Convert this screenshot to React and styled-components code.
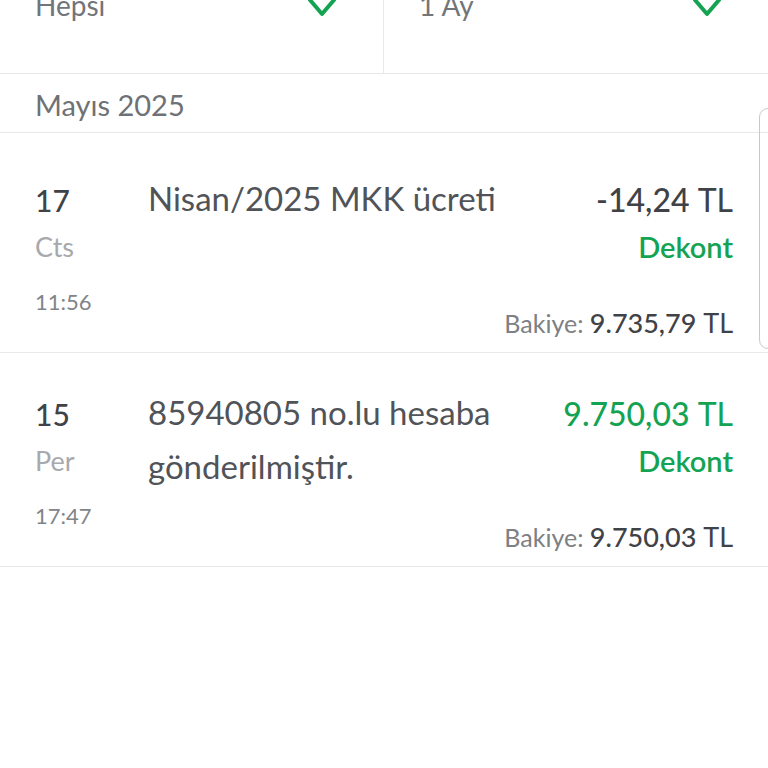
import React from 'react';
import styled, { createGlobalStyle } from 'styled-components';

const GlobalStyle = createGlobalStyle`
	html, body {
		margin: 0;
		padding: 0;
		background: #ffffff;
		overflow: hidden;
	}
	body {
		font-family: Lato, "Open Sans", sans-serif;
		-webkit-font-smoothing: antialiased;
	}
`;

const Screen = styled.div`
	position: relative;
	width: 768px;
	height: 768px;
	overflow: hidden;
	background: #ffffff;
`;

const FilterBar = styled.div`
	display: grid;
	grid-template-columns: 384px 1fr;
	height: 110px;
	margin-top: -37px;
	border-bottom: 1px solid #e8e8e8;
`;

const FilterCell = styled.div`
	display: flex;
	align-items: flex-start;
	justify-content: space-between;
	padding: 26px 47px 0 35px;
	border-right: ${(p) => (p.$divider ? '1px solid #e8e8e8' : 'none')};
`;

const FilterLabel = styled.span`
	font-size: 28px;
	line-height: 1.2;
	color: #727579;
`;

const Chevron = styled.svg`
	width: 28px;
	height: 18px;
	margin-top: 10px;
`;

const MonthHeader = styled.div`
	height: 59px;
	display: flex;
	align-items: center;
	padding: 2px 35px 0 35px;
	box-sizing: border-box;
	font-size: 29px;
	color: #6e7175;
	border-bottom: 1px solid #e8e8e8;
`;

const Row = styled.div`
	display: flex;
	padding: ${(p) => p.$top}px 35px 14px 35px;
	border-bottom: 1px solid #e8e8e8;
`;

const DateCol = styled.div`
	display: flex;
	flex-direction: column;
	width: 113px;
	flex-shrink: 0;
`;

const Main = styled.div`
	flex: 1;
	display: grid;
	grid-template-columns: minmax(0, 1fr) auto;
	grid-template-rows: auto auto;
`;

const DayNum = styled.div`
	font-size: 30px;
	line-height: 36px;
	font-weight: 500;
	color: #3f4247;
`;

const DayName = styled.div`
	font-size: 27px;
	line-height: 33px;
	margin-top: 12px;
	color: #a7a9ac;
`;

const Time = styled.div`
	font-size: 22px;
	line-height: 29px;
	margin-top: 24px;
	color: #818488;
`;

const Desc = styled.div`
	grid-column: 1;
	grid-row: 1 / span 2;
	font-size: 33px;
	line-height: 54px;
	margin-top: -11px;
	color: #505358;
	padding-right: 16px;
`;

const AmountCol = styled.div`
	grid-column: 2;
	grid-row: 1;
	display: flex;
	flex-direction: column;
	align-items: flex-end;
	white-space: nowrap;
`;

const Amount = styled.div`
	font-size: 32px;
	line-height: 36px;
	font-weight: 500;
	color: ${(p) => (p.$positive ? '#14a352' : '#3f4247')};
`;

const Currency = styled.span`
	font-weight: 400;
`;

const Receipt = styled.div`
	font-size: 29px;
	line-height: 33px;
	margin-top: 12px;
	font-weight: 600;
	color: #14a352;
`;

const Balance = styled.div`
	grid-column: 1 / -1;
	grid-row: 2;
	justify-self: end;
	white-space: nowrap;
	font-size: 25px;
	line-height: 29px;
	margin-top: 45px;
	color: #7d8084;
`;

const BalanceValue = styled.span`
	font-size: 27px;
	font-weight: 500;
	color: #3f4247;
`;

const ScrollHandle = styled.div`
	position: absolute;
	left: 759px;
	top: 108px;
	width: 24px;
	height: 239px;
	border: 1.5px solid #c9c9c9;
	border-radius: 9px;
	background: transparent;
`;

const transactions = [
	{
		day: '17',
		dayName: 'Cts',
		time: '11:56',
		desc: 'Nisan/2025 MKK ücreti',
		amount: '-14,24',
		positive: false,
		balance: '9.735,79',
		top: 49,
	},
	{
		day: '15',
		dayName: 'Per',
		time: '17:47',
		desc: '85940805 no.lu hesaba gönderilmiştir.',
		amount: '9.750,03',
		positive: true,
		balance: '9.750,03',
		top: 43,
	},
];

function ChevronDown() {
	return (
		<Chevron viewBox="0 0 28 18">
			<polyline
				points="2,1 14,15 26,1"
				fill="none"
				stroke="#14a352"
				strokeWidth="4"
				strokeLinecap="round"
				strokeLinejoin="round"
			/>
		</Chevron>
	);
}

function App() {
	return (
		<Screen>
			<GlobalStyle />
			<FilterBar>
				<FilterCell $divider>
					<FilterLabel>Hepsi</FilterLabel>
					<ChevronDown />
				</FilterCell>
				<FilterCell>
					<FilterLabel>1 Ay</FilterLabel>
					<ChevronDown />
				</FilterCell>
			</FilterBar>
			<MonthHeader>Mayıs 2025</MonthHeader>
			{transactions.map((t) => (
				<Row key={t.day} $top={t.top}>
					<DateCol>
						<DayNum>{t.day}</DayNum>
						<DayName>{t.dayName}</DayName>
						<Time>{t.time}</Time>
					</DateCol>
					<Main>
						<Desc>{t.desc}</Desc>
						<AmountCol>
							<Amount $positive={t.positive}>
								{t.amount} <Currency>TL</Currency>
							</Amount>
							<Receipt>Dekont</Receipt>
						</AmountCol>
						<Balance>
							Bakiye: <BalanceValue>{t.balance} <Currency>TL</Currency></BalanceValue>
						</Balance>
					</Main>
				</Row>
			))}
			<ScrollHandle />
		</Screen>
	);
}

export default App;
